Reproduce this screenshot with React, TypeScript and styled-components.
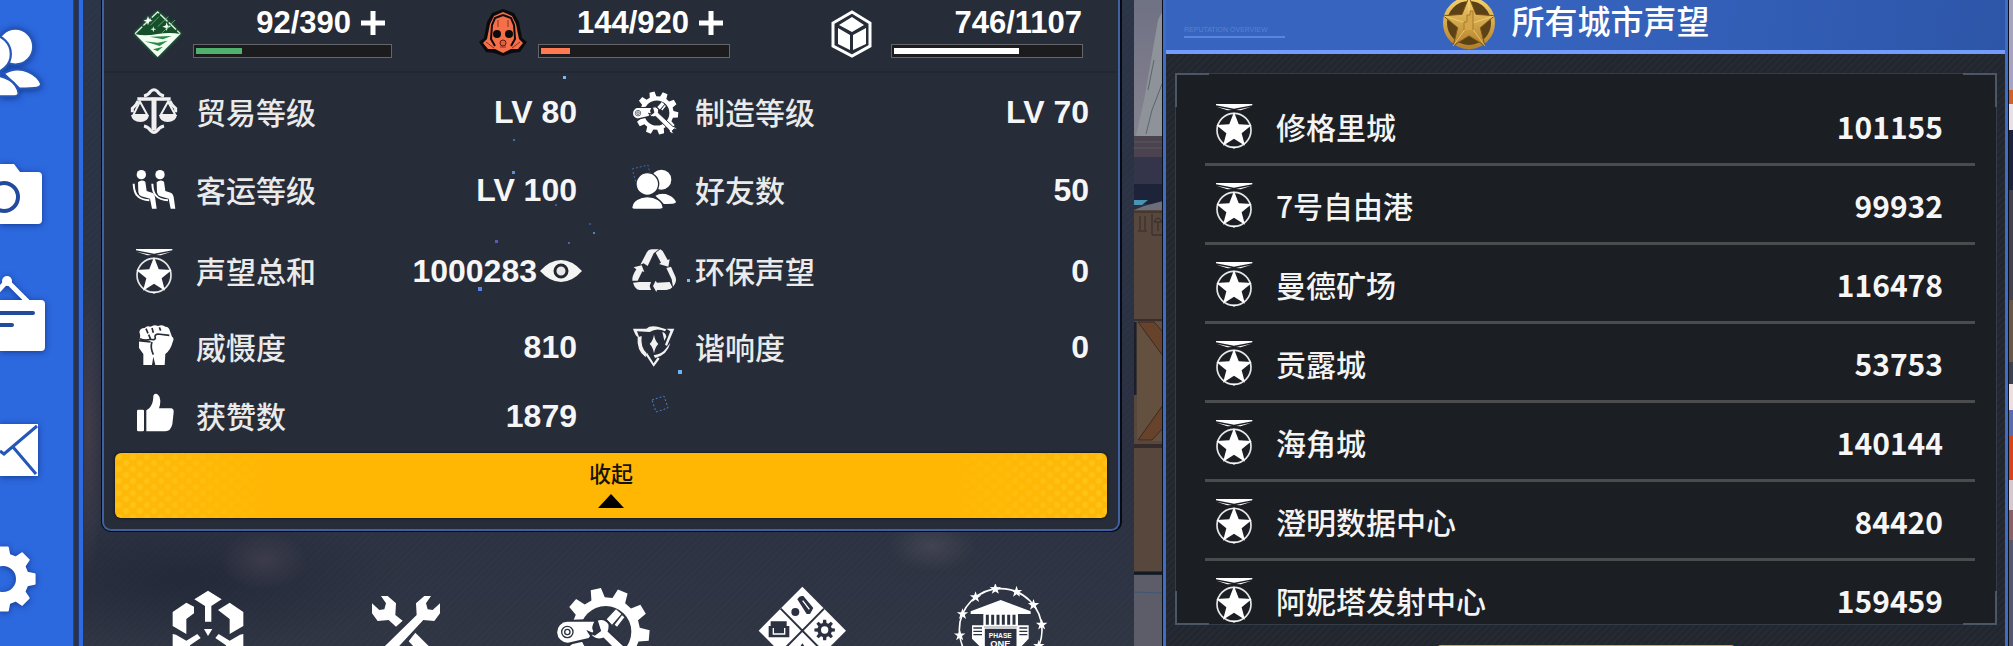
import React from 'react';
import styled, { createGlobalStyle } from 'styled-components';

const cjk = '"Noto Sans CJK SC", "Noto Sans", sans-serif';
const latin = '"Liberation Sans", Arial, sans-serif';

const GlobalStyle = createGlobalStyle`
  * { box-sizing: border-box; }
  body { margin: 0; background: #2b3140; font-family: ${cjk}; color: #f4f4f4; }
  button { border: 0; padding: 0; background: none; color: inherit; font: inherit; cursor: pointer; }
  ul, dl, dd, h2 { margin: 0; padding: 0; list-style: none; }
  svg { display: block; }
`;

const Screen = styled.div`
  display: flex;
  height: 100vh;
  overflow: hidden;
`;

/* ---------- side navigation ---------- */

const Nav = styled.nav`
  flex: 0 0 84px;
  display: flex;
  flex-direction: column;
  padding-top: 2px;
  background: linear-gradient(
    90deg,
    #2c68de 0 73px,
    #1f4597 73px 74px,
    #29344c 74px 78px,
    #1f3a78 78px 79px,
    #2f6ae0 79px 83px,
    #1f3566 83px
  );
`;

const NavButton = styled.button`
  flex: 0 0 128px;
  width: 73px;
  filter: drop-shadow(0 1px 3px rgba(12, 38, 110, 0.7));
`;

/* ---------- profile section ---------- */

const Profile = styled.main`
  flex: 1050 1 0;
  min-width: 0;
  display: flex;
  flex-direction: column;
  background:
    radial-gradient(ellipse 44px 30px at 180px 560px, rgba(84, 76, 90, 0.45), transparent),
    radial-gradient(ellipse 44px 26px at 848px 546px, rgba(96, 92, 106, 0.4), transparent),
    radial-gradient(ellipse 16px 150px at 4px 430px, rgba(88, 72, 84, 0.5), transparent),
    radial-gradient(ellipse 220px 70px at 100px 580px, rgba(30, 34, 52, 0.6), transparent),
    repeating-linear-gradient(135deg, rgba(255, 255, 255, 0.012) 0 2px, transparent 2px 5px),
    linear-gradient(#2a3547, #2a3040 70%, #2f3543);
`;

const Card = styled.section`
  position: relative;
  margin: 0 14px 0 18px;
  border: 2px solid #40609f;
  border-top: 0;
  border-radius: 0 0 9px 9px;
  box-shadow: 0 0 0 1px #060a14, 1px 0 0 1px #060a14;
  background: #262c38;
  padding-bottom: 11px;
`;

const Resources = styled.div`
  display: grid;
  grid-template-columns: 345fr 353fr 254fr;
  height: 73px;
  padding: 8px 33px 0 29px;
  border-bottom: 2px solid #222732;
`;

const Resource = styled.div`
  display: flex;
  align-items: flex-start;
`;

const ResourceIcon = styled.div`
  flex: 0 0 60px;
`;

const Meter = styled.div<{ $wide?: boolean }>`
  width: ${(p) => (p.$wide ? 199 : 192)}px;
`;

const Amount = styled.div<{ $inset: number }>`
  display: flex;
  justify-content: flex-end;
  align-items: center;
  gap: 10px;
  margin-bottom: 6px;
  padding-right: ${(p) => p.$inset}px;
  font: 700 31px/30px ${latin};
  color: #fff;
`;

const Track = styled.div`
  height: 14px;
  padding: 3px 2px;
  border: 1px solid #64666b;
  background: #1c1c1e;
`;

const Fill = styled.div<{ $color: string }>`
  height: 6px;
  background: ${(p) => p.$color};
`;

const Stats = styled.dl`
  display: grid;
  grid-template-columns: 453fr 460fr;
  grid-template-rows: 78px 78px 84px 68px 70px;
  column-gap: 46px;
  padding: 0 29px 2px 26px;
`;

const Stat = styled.div<{ $column: number }>`
  grid-column: ${(p) => p.$column};
  display: flex;
  align-items: center;
`;

const StatIcon = styled.svg`
  flex: 0 0 50px;
  height: 50px;
  margin-right: 16px;
`;

const StatLabel = styled.dt`
  padding-bottom: 2px;
  font-size: 30px;
  font-weight: 500;
  line-height: 40px;
  color: #eaeaea;
`;

const StatValue = styled.dd<{ $inset: number }>`
  display: flex;
  align-items: center;
  gap: 2px;
  margin-left: auto;
  padding-right: ${(p) => p.$inset}px;
  font: 700 32px/40px ${latin};
  color: #f6f6f6;
`;

const Particles = styled.svg`
  position: absolute;
  left: 0;
  top: 0;
  pointer-events: none;
`;

const Collapse = styled.button`
  display: flex;
  flex-direction: column;
  align-items: center;
  width: calc(100% - 22px);
  height: 65px;
  margin: 0 11px;
  padding-top: 3px;
  gap: 6px;
  border-radius: 6px;
  color: #171100;
  font-size: 22px;
  font-weight: 500;
  line-height: 32px;
  background:
    linear-gradient(90deg, transparent, #ffb704 160px, #ffb704 calc(100% - 160px), transparent),
    radial-gradient(circle at 4px 4px, #ffc418 2px, transparent 4px) 0 0 / 14px 12px,
    radial-gradient(circle at 4px 4px, #ffc418 2px, transparent 4px) 7px 6px / 14px 12px,
    #feb808;
  box-shadow: 0 0 2px 1px #1b1d22;
`;

const Shortcuts = styled.nav`
  display: grid;
  grid-template-columns: repeat(5, 1fr);
  margin-top: 53px;
  padding: 0 35px 0 25px;
`;

const Shortcut = styled.button`
  display: flex;
  justify-content: center;
  height: 96px;
  color: #fff;
`;

/* ---------- reputation section ---------- */

const SceneStrip = styled.svg`
  flex: none;
`;

const Reputation = styled.aside`
  flex: 839 1 0;
  min-width: 0;
  display: flex;
  flex-direction: column;
  border: solid #3f6cc4;
  border-width: 0 3px;
  box-shadow: 0 0 0 1px #0a0f1c;
  z-index: 1;
  background:
    repeating-linear-gradient(135deg, rgba(255, 255, 255, 0.02) 0 2px, transparent 2px 5px),
    #22262e;
`;

const Header = styled.header`
  flex: 0 0 54px;
  display: grid;
  grid-template-columns: 277fr auto 297fr;
  align-items: start;
  border-bottom: 4px solid #749cfa;
  background: linear-gradient(100deg, #3664be 40%, #335fb8 65%, #2d56a8);
`;

const Tagline = styled.div`
  width: 101px;
  margin: 24px 0 0 18px;
  border-bottom: 2px solid #5a85dc;
  font: 7px/12px ${latin};
  color: #5a82d2;
  white-space: nowrap;
`;

const Title = styled.h2`
  display: flex;
  gap: 16px;
  font-size: 33px;
  font-weight: 500;
  line-height: 40px;
  color: #fff;
`;

const Badge = styled.svg`
  margin-top: -4px;
`;

const Frame = styled.div`
  flex: 1 1 0;
  min-height: 0;
  position: relative;
  margin: 19px 8px 0 9px;
  padding: 13px 21px 0 29px;
  border: 1px solid #343c48;
  background: #1b1e23;
`;

const Corner = styled.span<{ $right?: boolean; $bottom?: boolean }>`
  position: absolute;
  width: 34px;
  height: 34px;
  border: solid #4b5666;
  ${(p) => (p.$right ? 'right: -1px;' : 'left: -1px;')}
  ${(p) => (p.$bottom ? 'bottom: -1px;' : 'top: -1px;')}
  border-width: ${(p) =>
    `${p.$bottom ? 0 : 2}px ${p.$right ? 2 : 0}px ${p.$bottom ? 2 : 0}px ${p.$right ? 0 : 2}px`};
`;

const CityList = styled.ul`
  height: 100%;
  overflow: hidden;
`;

const City = styled.li`
  display: flex;
  align-items: center;
  height: 79px;
  padding: 2px 32px 0 0;
  border-bottom: 3px solid #4b4c4d;
  font-size: 30px;
  font-weight: 500;
  line-height: 40px;
`;

const CityIcon = styled.svg`
  flex: 0 0 50px;
  height: 50px;
  margin: 0 16px 0 5px;
`;

const CityScore = styled.span`
  margin-left: auto;
  font-weight: 700;
  color: #f6f6f6;
`;

const Confirm = styled.button`
  flex: 0 0 60px;
  width: 298px;
  margin: 20px auto -59px;
  border-radius: 4px;
  background: #e3a514;
`;

/* ---------- shared shapes ---------- */

const starPoints = (cx: number, cy: number, r: number, inner = 0.4, n = 5) =>
  Array.from({ length: n * 2 }, (_, i) => {
    const a = -Math.PI / 2 + (i * Math.PI) / n;
    const d = i % 2 ? r * inner : r;
    return `${(cx + d * Math.cos(a)).toFixed(1)},${(cy + d * Math.sin(a)).toFixed(1)}`;
  }).join(' ');

const gearPath = (cx: number, cy: number, outer: number, root: number, hole: number, teeth: number, phase = 0) => {
  const step = (Math.PI * 2) / teeth;
  const at = (r: number, a: number) => `${(cx + r * Math.cos(a)).toFixed(1)} ${(cy + r * Math.sin(a)).toFixed(1)}`;
  let d = '';
  for (let i = 0; i < teeth; i++) {
    const a = phase + i * step;
    d += `${i ? 'L' : 'M'}${at(root, a - step * 0.32)}L${at(outer, a - step * 0.19)}L${at(outer, a + step * 0.19)}L${at(root, a + step * 0.32)}`;
  }
  return `${d}ZM${cx - hole} ${cy}a${hole} ${hole} 0 1 0 ${hole * 2} 0a${hole} ${hole} 0 1 0 ${-hole * 2} 0Z`;
};

const MedalShape = () => (
  <g fill="#fff">
    <path d="M18 9H127V13L72 23L18 13ZM20 17L66 27L52 28ZM124 17L78 27L92 28Z" />
    <circle cx="72" cy="88" r="51" fill="none" stroke="#e6e6e6" strokeWidth="5" />
    <path d="M62 137L72 143L82 137Z" />
    <polygon points={starPoints(72, 89, 56, 0.43)} />
  </g>
);

const PeopleShape = ({ gap }: { gap: string }) => (
  <g fill="#fff" stroke={gap} strokeWidth="4">
    <circle cx="97" cy="44" r="32" />
    <path d="M76 92C110 72 138 98 143 110C144 118 134 119 104 119Z" />
    <circle cx="55" cy="57" r="34" />
    <path d="M8 128C12 84 98 84 103 128C102 133 98 133 92 133H18C12 133 8 132 8 128Z" />
  </g>
);

const WorkshopShape = ({ gap }: { gap: string }) => (
  <g>
    <path d={gearPath(149, 143, 132, 103, 77, 10, Math.PI / 36)} fill="#fff" fillRule="evenodd" />
    <path d="M34 108L120 104V164L34 184Z" fill={gap} />
    <path d="M34 113L115 113Q104 130 112 142L98 162L36 176A31 31 0 0 1 34 113Z" fill="#fff" />
    <circle cx="34" cy="144" r="17" fill="none" stroke={gap} strokeWidth="4" />
    <circle cx="34" cy="144" r="8" fill="none" stroke={gap} strokeWidth="4" />
    <path d="M152 106L180 76L196 90L168 122ZM176 122L198 94L205 100L183 128Z" fill="#fff" />
    <path
      d="M122 108Q146 98 160 120Q162 132 158 142L246 224Q268 226 272 248L256 240L244 252L252 268Q228 270 224 246L142 164Q114 174 98 144L116 152L132 140Z"
      fill="#fff"
      stroke={gap}
      strokeWidth="6"
    />
  </g>
);

/* ---------- stat icons, drawn on a 150 unit grid ---------- */

const dark = '#262c38';

const ScalesIcon = () => (
  <StatIcon viewBox="0 0 150 150" fill="none" stroke="#f0f0f0">
    <path d="M42 27Q56 24 62 13Q72 3 82 13Q88 24 102 27M42 117Q56 120 62 131Q72 141 82 131Q88 120 102 117M24 42Q20 54 7 64V76M120 42Q124 54 137 64V76" strokeWidth="9" />
    <path d="M22 36H122" strokeWidth="10" />
    <path d="M72 32V130" strokeWidth="15" />
    <path d="M30 44L10 84H52ZM114 44L92 84H136Z" strokeWidth="6" />
    <path d="M3 84H57Q54 105 31 105Q7 105 3 84ZM87 84H141Q137 105 113 105Q90 105 87 84Z" fill="#f0f0f0" stroke="none" />
  </StatIcon>
);

const SeatsIcon = () => (
  <StatIcon viewBox="0 0 150 150">
    {[0, 56].map((x) => (
      <g key={x} transform={`translate(${x} 0)`}>
        <circle cx="34" cy="29" r="14" fill="#fff" />
        <path d="M24 52Q34 42 46 50L50 78L68 84Q74 88 75 96L80 131H66L60 101L34 94Q26 90 25 82Z" fill="#fff" />
        <path d="M11 56Q12 84 24 94Q34 104 58 106" fill="none" stroke="#fff" strokeWidth="6" />
      </g>
    ))}
  </StatIcon>
);

const MedalIcon = () => (
  <StatIcon viewBox="0 0 150 150">
    <MedalShape />
  </StatIcon>
);

const FistIcon = () => (
  <StatIcon viewBox="0 0 150 150">
    <path
      d="M28 30Q30 18 44 18Q50 10 62 14Q72 6 84 12Q98 6 106 14Q118 14 120 28L126 44Q134 48 128 60Q122 84 106 96L104 129H76L70 104L66 129H40V96L27 78V56Q34 44 28 30Z"
      fill="#fff"
    />
    <path d="M30 50Q44 58 62 52L56 38M62 52Q74 56 76 48Q72 38 84 36L118 40M66 60Q60 76 70 98M48 20L54 34M66 18L70 32M88 16L92 26M26 56L62 60" fill="none" stroke={dark} strokeWidth="5" />
  </StatIcon>
);

const ThumbIcon = () => (
  <StatIcon viewBox="0 0 150 150" fill="#fff">
    <rect x="21" y="56" width="21" height="65" rx="4" />
    <path d="M49 58C62 50 70 38 70 14Q72 7 79 8Q90 12 91 30Q91 42 87 52H124Q132 54 131 64L127 100Q122 121 106 121H49Z" />
  </StatIcon>
);

const CraftIcon = () => (
  <StatIcon viewBox="-21 -16 306 306">
    <WorkshopShape gap={dark} />
  </StatIcon>
);

const FriendsIcon = () => (
  <StatIcon viewBox="0 0 150 150">
    <PeopleShape gap={dark} />
  </StatIcon>
);

const RecycleIcon = () => (
  <StatIcon viewBox="0 0 150 150" fill="#f2f2f2">
    <path d="M34 56L54 18Q58 10 68 10H90L74 22L56 60L44 52Z" />
    <path d="M80 20L94 10Q102 14 106 24L116 42L122 40L118 62L90 54L96 50L84 28Z" />
    <path d="M14 64L38 58L46 78L40 76L26 104H10Q8 92 22 70Z" />
    <path d="M12 110L32 108H66L62 120L66 132H32Q18 130 12 110Z" />
    <path d="M112 66L126 62L140 94Q144 110 132 122L128 100Z" />
    <path d="M72 120L80 104L84 110L122 108L130 124Q124 132 112 132H84L82 138Z" />
  </StatIcon>
);

const ResonanceIcon = () => (
  <StatIcon viewBox="0 0 150 150" fill="#f2f2f2">
    <path d="M12 20H52Q62 10 86 14L112 22L108 28Q84 16 62 30L24 28L30 44Q22 50 12 20Z" />
    <path d="M112 20L136 20L114 72L108 68L124 28Z" />
    <path d="M26 46L38 42Q34 76 52 92L50 106Q22 86 26 46Z" />
    <path d="M100 30Q110 32 112 44L106 56ZM112 78L124 62Q116 98 78 108L74 100Q100 96 112 78Z" />
    <path d="M54 92L74 124L86 106L92 110L74 134L50 98Z" />
    <path d="M75 38Q78 56 88 66Q78 76 75 94Q72 76 62 66Q72 56 75 38Z" />
  </StatIcon>
);

/* ---------- resource icons ---------- */

const CrystalIcon = () => (
  <svg width="50" height="54" viewBox="396 26 150 162">
    <g style={{ filter: 'drop-shadow(0 0 4px #1f9a3c)' }}>
      <path d="M402 104L470 38L538 104L470 173Z" fill="#16502a" />
      <path d="M402 103L470 38L538 103" fill="none" stroke="#d9f2dc" strokeWidth="4" strokeDasharray="30 5" />
      <path d="M402 104Q430 112 470 104Q506 98 538 104L470 173Z" fill="#f2fff2" />
      <path d="M446 112L512 110L486 120ZM430 126L470 130L500 124L476 140ZM456 150L486 142L470 156Z" fill="#2b8a45" />
      <polygon points={starPoints(441, 64, 14, 0.35, 4)} fill="#fff" />
      <polygon points={starPoints(497, 82, 13, 0.35, 4)} fill="#fff" />
      <polygon points={starPoints(457, 90, 9, 0.35, 4)} fill="#d9f2dc" />
      <path d="M470 82L502 52M484 100L522 62M448 78L474 52" stroke="#7fc892" strokeWidth="2" />
    </g>
  </svg>
);

const MaskIcon = () => (
  <svg width="50" height="50" viewBox="0 0 50 50">
    <path d="M25 1L36 5L41 14L44 30L49 34L42 44L34 45L25 48L16 45L8 44L1 34L6 30L9 14L14 5Z" fill="#0b0b0d" />
    <path d="M25 4L34 8L38 16L41 31L45 35L40 41L33 41L25 45L17 41L10 41L5 35L9 31L12 16L16 8Z" fill="#f56f48" />
    <path d="M25 7L33 10L36 17L37 31L33 38M25 7L17 10L14 17L13 31L17 38" fill="none" stroke="#0b0b0d" strokeWidth="2" />
    <path d="M20 12V19M30 12V19M8 34L16 40M42 34L34 40M22 39H28" stroke="#8b3020" strokeWidth="1" />
    <ellipse cx="19" cy="26" rx="4" ry="4" fill="#0b0b0d" />
    <ellipse cx="31" cy="26" rx="4" ry="4" fill="#0b0b0d" />
    <circle cx="25" cy="35" r="3" fill="#e0603c" stroke="#5a1d12" strokeWidth="1" />
  </svg>
);

const CubeIcon = () => (
  <svg width="42" height="50" viewBox="0 0 42 50">
    <path d="M21 4L39 15V38L21 48L2 38V15Z" fill="none" stroke="#fff" strokeWidth="3" />
    <path d="M21 9L33 17L21 24L8 17ZM7 20L19 27V42L7 36ZM35 20L22 27V42L35 36Z" fill="#fff" />
  </svg>
);

const PlusIcon = () => (
  <svg width="24" height="24" viewBox="0 0 24 24" stroke="#fff" strokeWidth="5">
    <path d="M12 0V24M0 12H24" />
  </svg>
);

const EyeIcon = () => (
  <svg width="44" height="26" viewBox="0 0 44 26">
    <path d="M1 13Q11 2 22 2T43 13Q33 24 22 24T1 13Z" fill="#f4f4f2" />
    <circle cx="22" cy="13" r="6" fill="#e8e8e8" stroke="#23272f" strokeWidth="3" />
  </svg>
);

/* ---------- sidebar icons, clipped by the screen edge ---------- */

const navIcons: { name: string; art: React.ReactNode }[] = [
  {
    name: '好友',
    art: (
      <g transform="translate(-39 20) scale(.56)">
        <PeopleShape gap="#2457b8" />
      </g>
    ),
  },
  {
    name: '相机',
    art: (
      <g>
        <path d="M0 34H14L20 42H38Q42 42 42 46V90Q42 94 38 94H0Z" fill="#fff" />
        <circle cx="4" cy="67" r="14" fill="#fff" stroke="#224b9e" strokeWidth="4" />
      </g>
    ),
  },
  {
    name: '公告',
    art: (
      <g>
        <path d="M-14 46L7 23L28 44" fill="none" stroke="#fff" strokeWidth="5" />
        <circle cx="7" cy="23" r="5" fill="#fff" />
        <path d="M0 42H41Q45 42 45 46V89Q45 93 41 93H0Z" fill="#fff" />
        <path d="M0 55H33M0 67H12" stroke="#224b9e" strokeWidth="4" strokeLinecap="round" />
      </g>
    ),
  },
  {
    name: '邮件',
    art: (
      <g>
        <path d="M0 38H38V90H0Z" fill="#fff" />
        <path d="M0 65L4 68L37 40M13 61L36 88" fill="none" stroke="#2457b8" strokeWidth="3" />
      </g>
    ),
  },
  {
    name: '设置',
    art: <path d={gearPath(3, 65, 32, 25, 14, 8)} fill="#fff" fillRule="evenodd" stroke="#fff" strokeWidth="2" strokeLinejoin="round" />,
  },
];

/* ---------- shortcut icons, drawn on a 288 unit grid ---------- */

const shortcutIcons: { name: string; art: React.ReactNode }[] = [
  {
    name: '仓库',
    art: (
      <g fill="#fff">
        <path d="M144 20L185 46L154 66V113H135V66L103 46Z" />
        <path d="M38 84L79 56L102 68V88L79 105V150L38 126Z" />
        <path d="M250 84L209 56L174 78L209 105V150L250 126Z" />
        <path d="M132 135H157L144 156Z" />
        <path d="M38 150L48 152L79 170L112 150L122 162L90 184V230L38 200Z" />
        <path d="M250 150L240 152L209 170L176 150L166 162L198 184V230L250 200Z" />
      </g>
    ),
  },
  {
    name: '维修',
    art: (
      <g fill="#fff">
        <path d="M69 36H89L114 58L112 93L134 110L114 128L92 108L59 111L42 88V58L64 78L79 76L84 58Z" />
        <path d="M219 36H199L174 58L176 93L40 226L64 250L196 108L229 111L246 88V58L224 78L209 76L204 58Z" />
        <path d="M172 146L236 210L216 240L152 172Z" />
      </g>
    ),
  },
  { name: '制造', art: <WorkshopShape gap="#2b3140" /> },
  {
    name: '装修',
    art: (
      <g>
        <path d="M145 8L276 140L145 272L14 140Z" fill="#fff" />
        <path d="M80 74L210 206M210 74L80 206" stroke="#2b3140" strokeWidth="6" />
        <g fill="#2b3140">
          <path d="M130 46Q136 34 148 36L178 72L168 90H158Z" />
          <circle cx="124" cy="84" r="12" />
          <path d={gearPath(212, 138, 31, 22, 11, 8)} fillRule="evenodd" />
          <path d="M50 112H98V126H106V160H44V126H50Z" />
          <path d="M145 178L166 206H126Z" />
        </g>
        <path d="M146 50L166 76M58 132V150H92V132" fill="none" stroke="#fff" strokeWidth="4" />
      </g>
    ),
  },
  {
    name: '成就',
    art: (
      <g fill="#fff">
        <circle cx="146" cy="138" r="124" fill="none" stroke="#fff" strokeWidth="5" />
        {Array.from({ length: 12 }, (_, i) => {
          const a = (i * Math.PI) / 6 - 1.7;
          return <polygon key={i} points={starPoints(146 + 124 * Math.cos(a), 138 + 124 * Math.sin(a), 18)} />;
        })}
        <path d="M146 48L236 82V90H56V82Z" />
        <path d="M94 90H198V128H94Z" />
        <path d="M106 92V122M122 92V122M138 92V122M154 92V122M170 92V122M186 92V122" stroke="#2b3140" strokeWidth="9" />
        <path d="M60 124H96V200L60 164ZM196 124H230V164L196 200Z" />
        <path d="M64 132H90M64 142H90M64 152H90M202 132H226M202 142H226M202 152H226" stroke="#2b3140" strokeWidth="4" />
        <path d="M96 132H196V214H96Z" fill="#2b3140" stroke="#fff" strokeWidth="5" />
        <text x="145" y="161" fontSize="20" fontWeight="700" fontFamily={latin} textAnchor="middle">
          PHASE
        </text>
        <text x="145" y="188" fontSize="28" fontWeight="700" fontFamily={latin} textAnchor="middle">
          ONE
        </text>
      </g>
    ),
  },
];

/* ---------- data ---------- */

const resources = [
  { name: '体力', Icon: CrystalIcon, text: '92/390', color: '#50b06e', value: 92, max: 390, add: true },
  { name: '疲劳', Icon: MaskIcon, text: '144/920', color: '#ff7a50', value: 144, max: 920, add: true },
  { name: '货舱', Icon: CubeIcon, text: '746/1107', color: '#fff', value: 746, max: 1107, add: false },
];

const stats = [
  { label: '贸易等级', value: 'LV 80', Icon: ScalesIcon, column: 1 },
  { label: '制造等级', value: 'LV 70', Icon: CraftIcon, column: 2 },
  { label: '客运等级', value: 'LV 100', Icon: SeatsIcon, column: 1 },
  { label: '好友数', value: '50', Icon: FriendsIcon, column: 2 },
  { label: '声望总和', value: '1000283', Icon: MedalIcon, column: 1, detail: true },
  { label: '环保声望', value: '0', Icon: RecycleIcon, column: 2 },
  { label: '威慑度', value: '810', Icon: FistIcon, column: 1 },
  { label: '谐响度', value: '0', Icon: ResonanceIcon, column: 2 },
  { label: '获赞数', value: '1879', Icon: ThumbIcon, column: 1 },
];

const cities: [string, number][] = [
  ['修格里城', 101155],
  ['7号自由港', 99932],
  ['曼德矿场', 116478],
  ['贡露城', 53753],
  ['海角城', 140144],
  ['澄明数据中心', 84420],
  ['阿妮塔发射中心', 159459],
];

/* x, y, size, colour */
const sparks: [number, number, number, string][] = [
  [459, 76, 3, '#7ab8f0'],
  [409, 139, 2, '#4a68b0'],
  [408, 171, 3, '#5590d8'],
  [451, 204, 2, '#3c5a90'],
  [485, 223, 2, '#34508c'],
  [489, 232, 2, '#4a80e0'],
  [391, 240, 3, '#5a58b0'],
  [464, 242, 2, '#6456b0'],
  [374, 287, 4, '#5c82f0'],
  [583, 279, 3, '#7cc0f8'],
  [574, 370, 4, '#6cb4f4'],
];

export default function App() {
  return (
    <Screen>
      <GlobalStyle />
      <Nav>
        {navIcons.map(({ name, art }) => (
          <NavButton key={name} aria-label={name}>
            <svg width="48" height="128" viewBox="0 0 48 128">
              {art}
            </svg>
          </NavButton>
        ))}
      </Nav>

      <Profile>
        <Card>
          <Resources>
            {resources.map(({ name, Icon, text, color, value, max, add }) => (
              <Resource key={name}>
                <ResourceIcon>
                  <Icon />
                </ResourceIcon>
                <Meter $wide={name === '体力'}>
                  <Amount $inset={add ? 7 : 1}>
                    {text}
                    {add && (
                      <button aria-label={`增加${name}`}>
                        <PlusIcon />
                      </button>
                    )}
                  </Amount>
                  <Track>
                    <Fill $color={color} style={{ width: `${(value / max) * 100}%` }} />
                  </Track>
                </Meter>
              </Resource>
            ))}
          </Resources>
          <Stats>
            {stats.map(({ label, value, Icon, column, detail }) => (
              <Stat key={label} $column={column}>
                <Icon />
                <StatLabel>{label}</StatLabel>
                <StatValue $inset={column === 1 && !detail ? 6 : 0}>
                  {value}
                  {detail && (
                    <button aria-label="查看声望">
                      <EyeIcon />
                    </button>
                  )}
                </StatValue>
              </Stat>
            ))}
          </Stats>
          <Collapse>
            收起
            <svg width="26" height="14" viewBox="0 0 26 14">
              <path d="M13 0L26 14H0Z" />
            </svg>
          </Collapse>
          <Particles width="700" height="430">
            {sparks.map(([x, y, size, color]) => (
              <rect key={`${x}-${y}`} x={x} y={y} width={size} height={size} fill={color} />
            ))}
            <path d="M528 169L544 165L546 174M529 172L533 186" fill="none" stroke="#3a6bb8" strokeDasharray="2 2" />
            <path d="M548 400L560 396L564 408L552 412Z" fill="none" stroke="#4a7ccc" strokeDasharray="2 2" />
          </Particles>
        </Card>
        <Shortcuts>
          {shortcutIcons.map(({ name, art }) => (
            <Shortcut key={name} aria-label={name}>
              <svg width="96" height="96" viewBox="0 0 288 288">
                {art}
              </svg>
            </Shortcut>
          ))}
        </Shortcuts>
      </Profile>

      <SceneStrip width="29" height="646" viewBox="0 0 29 646">
        <defs>
          <linearGradient id="wall" x2="0" y2="1">
            <stop offset="0" stopColor="#6f7184" />
            <stop offset="1" stopColor="#85838f" />
          </linearGradient>
        </defs>
        <path fill="url(#wall)" d="M0 0H29V136H0Z" />
        <path fill="#8d9398" d="M24 20L29 10V136H2L10 100Z" />
        <path d="M28 84L18 110L12 134M20 60L14 90" stroke="#5a6470" fill="none" />
        <path fill="#4b4450" d="M0 136H29V160H0Z" />
        <path d="M0 142H29M0 148H29" stroke="#5d5660" />
        <path fill="#34354a" d="M0 157H29V184H0Z" />
        <path fill="#1d2338" d="M0 184H29V204H0Z" />
        <path fill="#4a93b4" d="M0 200H14L8 205H0Z" />
        <path fill="#6c6e7c" d="M10 206L29 201V210H0Z" />
        <path fill="#57473d" d="M0 210H29V574H0Z" />
        <path d="M0 212H29M6 216V230M11 216V230M4 231H13M18 214V235H29M24 222V231M20 222Q24 214 28 222Z" stroke="#352b29" fill="none" />
        <path d="M0 320H29" stroke="#382e2c" strokeWidth="2" />
        <path fill="#63503e" d="M3 322H29V441H3Z" />
        <path d="M4 322L29 356V332L20 322ZM4 440L29 405V428L18 440Z" fill="#67432c" stroke="#3c2b24" />
        <path d="M1 322V395" stroke="#1d1e2b" strokeWidth="3" />
        <path d="M0 446H29" stroke="#352b2c" strokeWidth="4" />
        <path d="M0 573H29" stroke="#111a22" strokeWidth="3" />
        <path fill="#5c5d68" d="M0 575H29V646H0Z" />
        <path d="M0 592L29 593" stroke="#3d5678" />
      </SceneStrip>

      <Reputation>
        <Header>
          <Tagline>REPUTATION OVERVIEW</Tagline>
          <Title>
            <Badge width="54" height="54" viewBox="0 0 54 54">
              <defs>
                <linearGradient id="gold" x2="0" y2="1">
                  <stop offset="0" stopColor="#f3cf6c" />
                  <stop offset="1" stopColor="#b5822c" />
                </linearGradient>
              </defs>
              <path d="M27 54L20 50H34Z" fill="#a87a2c" />
              <circle cx="27" cy="27" r="24" fill="#5c4116" stroke="url(#gold)" strokeWidth="4" />
              <polygon points={starPoints(27, 28, 27, 0.44)} fill="url(#gold)" stroke="#7a5518" />
              <path d="M27 2V28L52 20M27 28L43 50M27 28L11 50M27 28L2 20" stroke="#ffe28a" fill="none" opacity=".6" />
              <path d="M22 34V26H25V19H28V15H31V34" fill="#d6a648" stroke="#a67a30" />
            </Badge>
            所有城市声望
          </Title>
        </Header>
        <Frame>
          <CityList>
            {cities.map(([name, score]) => (
              <City key={name}>
                <CityIcon viewBox="0 0 150 150">
                  <MedalShape />
                </CityIcon>
                {name}
                <CityScore>{score}</CityScore>
              </City>
            ))}
          </CityList>
          <Corner />
          <Corner $right />
          <Corner $bottom />
          <Corner $right $bottom />
        </Frame>
        <Confirm aria-label="确认" />
      </Reputation>

      <SceneStrip width="5" height="646" viewBox="0 0 5 646">
        <path fill="#a9a2c0" d="M0 0H5V90H0Z" />
        <path fill="#d0602c" d="M0 90H5V104H0Z" />
        <path fill="#e8dfe8" d="M0 104H5V130H0Z" />
        <path fill="#1e2236" d="M0 130H5V190H0Z" />
        <path fill="#42434f" d="M0 190H5V300H0Z" />
        <path fill="#6b5745" d="M0 300H5V362H0Z" />
        <path fill="#3d4050" d="M0 362H5V384H0Z" />
        <path fill="#f0dede" d="M0 384H5V410H0Z" />
        <path fill="#5a6cb0" d="M0 410H5V436H0Z" />
        <path fill="#d8421c" d="M0 436H5V480H0Z" />
        <path fill="#d8c6d0" d="M0 480H5V510H0Z" />
        <path fill="#8a5f68" d="M0 510H5V540H0Z" />
        <path fill="#55586a" d="M0 540H5V646H0Z" />
      </SceneStrip>
    </Screen>
  );
}
